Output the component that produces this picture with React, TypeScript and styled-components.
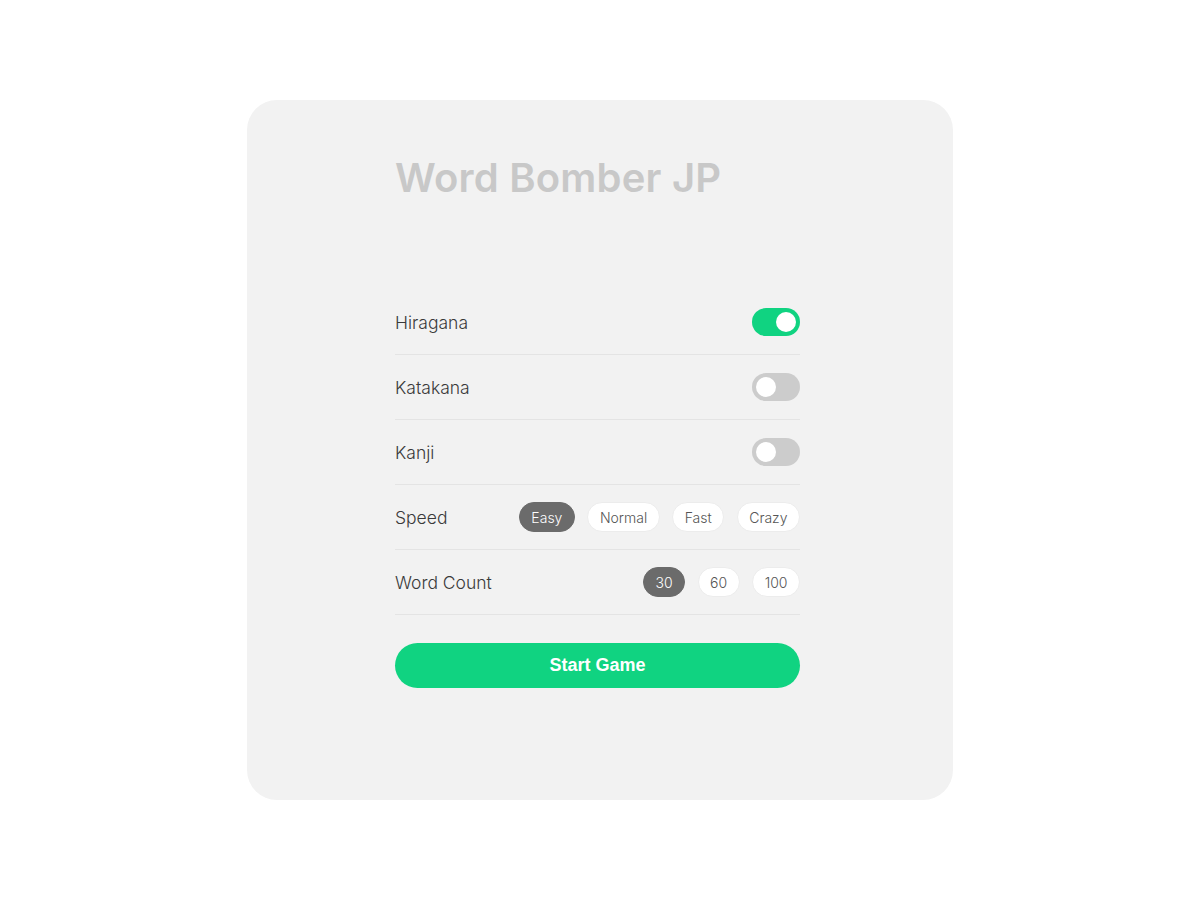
import React, { useState } from 'react'
import styled, { createGlobalStyle } from 'styled-components'

const GlobalStyle = createGlobalStyle`
  html, body {
    margin: 0;
    padding: 0;
    background: #ffffff;
  }
  body {
    font-family: Inter, "Noto Sans", sans-serif;
  }
`

const speeds = ['Easy', 'Normal', 'Fast', 'Crazy']
const counts = ['30', '60', '100']

export default function App() {
  const [scripts, setScripts] = useState({ Hiragana: true, Katakana: false, Kanji: false })
  const [speed, setSpeed] = useState('Easy')
  const [count, setCount] = useState('30')

  return (
    <Page>
      <GlobalStyle />
      <Card>
        <Title>Word Bomber JP</Title>
        <Settings>
          {(Object.keys(scripts) as (keyof typeof scripts)[]).map((name) => (
            <Row key={name}>
              <Label>{name}</Label>
              <Toggle
                $on={scripts[name]}
                onClick={() => setScripts({ ...scripts, [name]: !scripts[name] })}
              >
                <Knob />
              </Toggle>
            </Row>
          ))}
          <Row>
            <Label>Speed</Label>
            <Options>
              {speeds.map((s) => (
                <Pill key={s} $active={speed === s} onClick={() => setSpeed(s)}>
                  {s}
                </Pill>
              ))}
            </Options>
          </Row>
          <Row>
            <Label>Word Count</Label>
            <Options>
              {counts.map((c) => (
                <Pill key={c} $active={count === c} onClick={() => setCount(c)}>
                  {c}
                </Pill>
              ))}
            </Options>
          </Row>
        </Settings>
        <StartButton>Start Game</StartButton>
      </Card>
    </Page>
  )
}

const Page = styled.div`
  display: flex;
  align-items: center;
  justify-content: center;
  width: 1200px;
  height: 900px;
`

const Card = styled.div`
  display: flex;
  flex-direction: column;
  box-sizing: border-box;
  width: 706px;
  height: 700px;
  padding: 54px 153px 0 148px;
  background: #f2f2f2;
  border-radius: 30px;
`

const Title = styled.h1`
  margin: 0 0 88px;
  font-size: 40px;
  line-height: 48px;
  font-weight: 600;
  letter-spacing: 0.2px;
  color: #c8c8c8;
`

const Settings = styled.div`
  display: flex;
  flex-direction: column;
`

const Row = styled.div`
  display: flex;
  align-items: center;
  justify-content: space-between;
  height: 64px;
  border-bottom: 1px solid #e4e4e4;
`

const Label = styled.span`
  font-size: 17.5px;
  font-weight: 300;
  color: #3a3a3a;
`

const Toggle = styled.button<{ $on: boolean }>`
  display: flex;
  align-items: center;
  justify-content: ${(p) => (p.$on ? 'flex-end' : 'flex-start')};
  box-sizing: border-box;
  width: 48px;
  height: 28px;
  padding: 0 4px;
  border: none;
  border-radius: 14px;
  background: ${(p) => (p.$on ? '#10d381' : '#cccccc')};
  cursor: pointer;
`

const Knob = styled.span`
  width: 20px;
  height: 20px;
  border-radius: 50%;
  background: #ffffff;
`

const Options = styled.div`
  display: flex;
  gap: 12.5px;
`

const Pill = styled.button<{ $active: boolean }>`
  height: 30px;
  padding: 0 11.5px;
  border: 1px solid ${(p) => (p.$active ? '#6b6b6b' : '#ececec')};
  border-radius: 15px;
  background: ${(p) => (p.$active ? '#6b6b6b' : '#ffffff')};
  color: ${(p) => (p.$active ? '#ffffff' : '#555555')};
  font-family: Inter, "Noto Sans", sans-serif;
  font-size: 14px;
  font-weight: 300;
  cursor: pointer;
`

const StartButton = styled.button`
  margin-top: 28px;
  height: 45px;
  border: none;
  border-radius: 23px;
  background: #10d381;
  color: #ffffff;
  font-family: "Liberation Sans", Arial, sans-serif;
  font-size: 18px;
  font-weight: 700;
  cursor: pointer;
`
